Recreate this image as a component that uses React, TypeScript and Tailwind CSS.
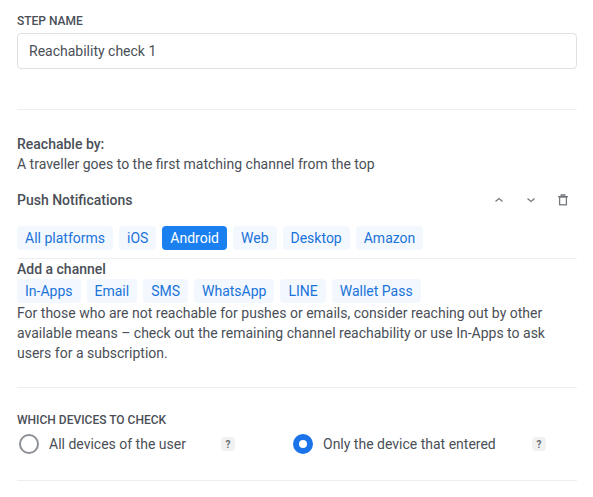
import React from 'react';

const Pill = ({ label, active }: { label: string; active?: boolean }) => (
    <span className={`h-6 px-2 rounded flex items-center text-[14px] ${active ? 'bg-[#1a7fef] text-white' : 'bg-[#f3f8fe] text-[#1a73d9]'}`}>
        {label}
    </span>
);

const Help = () => (
    <span className="w-[14px] h-[14px] rounded-sm bg-[#f1f1f1] text-[#666b72] text-[10px] font-bold flex items-center justify-center">?</span>
);

const IconUp = () => (
    <svg width="12" height="12" viewBox="0 0 12 12" fill="none" stroke="#74787e" strokeWidth="1.3"><path d="M2.5 7.5 6 4.5l3.5 3" /></svg>
);

const IconDown = () => (
    <svg width="12" height="12" viewBox="0 0 12 12" fill="none" stroke="#74787e" strokeWidth="1.3"><path d="M2.5 4.5 6 7.5l3.5-3" /></svg>
);

const IconTrash = () => (
    <svg width="12" height="12" viewBox="0 0 12 12" fill="none" stroke="#74787e" strokeWidth="1.3"><path d="M1 2.6h10M4.2 2.4V1h3.6v1.4" /><rect x="2.6" y="3" width="6.8" height="7.8" /></svg>
);

const App: React.FC = () => {
    return (
        <div className="w-[593px] h-[497px] bg-white overflow-hidden pl-[17px] pr-4 pt-[14px] text-[#4a4f57] font-['Roboto',sans-serif] text-[14px]">
            <div className="text-[12px] leading-[14px] font-medium uppercase">Step name</div>
            <div className="mt-[5px] h-9 border border-[#dfe1e5] rounded flex items-center px-[11px] text-[14px]">Reachability check 1</div>

            <div className="mt-10 border-t border-[#eceef1]"></div>

            <div className="mt-[24px] leading-5 font-medium">Reachable by:</div>
            <div className="leading-5">A traveller goes to the first matching channel from the top</div>

            <div className="mt-[16px] h-5 flex items-center justify-between">
                <span className="font-medium">Push Notifications</span>
                <div className="flex items-center gap-5 pr-2">
                    <IconUp />
                    <IconDown />
                    <IconTrash />
                </div>
            </div>

            <div className="mt-[16px] flex gap-[6px]">
                <Pill label="All platforms" />
                <Pill label="iOS" />
                <Pill label="Android" active />
                <Pill label="Web" />
                <Pill label="Desktop" />
                <Pill label="Amazon" />
            </div>
            <div className="mt-2 border-t border-[#eceef1]"></div>

            <div className="leading-5 font-medium h-5">Add a channel</div>
            <div className="flex gap-[6px]">
                <Pill label="In-Apps" />
                <Pill label="Email" />
                <Pill label="SMS" />
                <Pill label="WhatsApp" />
                <Pill label="LINE" />
                <Pill label="Wallet Pass" />
            </div>
            <p className="leading-5">
                For those who are not reachable for pushes or emails, consider reaching out by other available means – check out the remaining channel reachability or use In-Apps to ask users for a subscription.
            </p>

            <div className="mt-[24px] border-t border-[#eceef1]"></div>

            <div className="mt-[25px] text-[12px] leading-[14px] font-medium uppercase">Which devices to check</div>
            <div className="mt-[7px] flex items-center h-5">
                <div className="flex items-center w-[276px]">
                    <span className="ml-[2px] w-5 h-5 rounded-full border-2 border-[#8c9096]"></span>
                    <span className="ml-[10px] w-[172px]">All devices of the user</span>
                    <Help />
                </div>
                <div className="flex items-center">
                    <span className="w-5 h-5 rounded-full border-[6px] border-[#1a73e8] bg-white"></span>
                    <span className="ml-[10px] w-[209px]">Only the device that entered</span>
                    <Help />
                </div>
            </div>

            <div className="mt-[26px] border-t border-[#eceef1]"></div>
        </div>
    );
};

export default App;
